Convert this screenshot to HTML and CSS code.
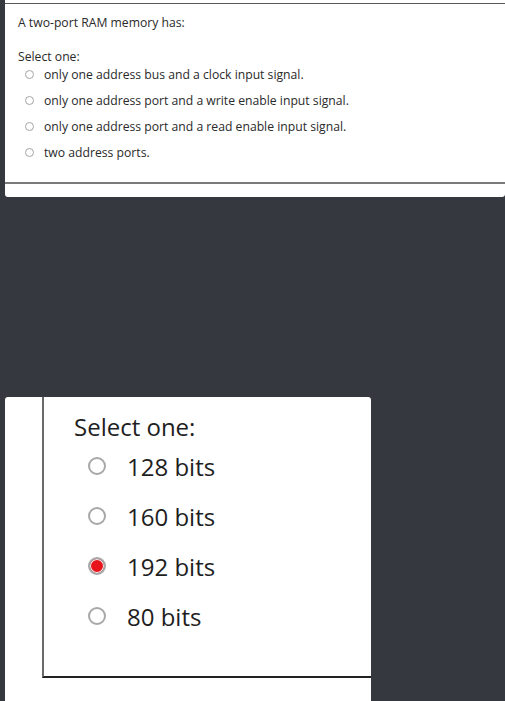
FILE: index.html
```html
<!DOCTYPE html>
<html>
<head>
<meta charset="utf-8">
<link rel="stylesheet" href="styles.css">
</head>
<body>
<div class="card card-top">
  <div class="qbody">
    <div class="qtext">A two-port RAM memory has:</div>
    <div class="prompt">Select one:</div>
    <div class="answers">
      <div class="opt"><span class="radio"></span><span>only one address bus and a clock input signal.</span></div>
      <div class="opt"><span class="radio"></span><span>only one address port and a write enable input signal.</span></div>
      <div class="opt"><span class="radio"></span><span>only one address port and a read enable input signal.</span></div>
      <div class="opt"><span class="radio"></span><span>two address ports.</span></div>
    </div>
  </div>
</div>
<div class="card card-zoom">
  <div class="zbody">
    <div class="zprompt">Select one:</div>
    <div class="zanswers">
      <div class="zopt"><span class="zradio"></span><span>128 bits</span></div>
      <div class="zopt"><span class="zradio"></span><span>160 bits</span></div>
      <div class="zopt"><span class="zradio checked"></span><span>192 bits</span></div>
      <div class="zopt"><span class="zradio"></span><span>80 bits</span></div>
    </div>
  </div>
</div>
</body>
</html>
```
FILE: styles.css
```css
html, body {
  margin: 0;
  padding: 0;
  background: #36383f;
  height: 701px;
  overflow: hidden;
}
body {
  font-family: "Open Sans", "Noto Sans", sans-serif;
  color: #1e1e1e;
}
.card {
  background: #fff;
  margin-left: 5px;
  overflow: hidden;
}
.card-top {
  width: 500px;
  height: 197px;
  box-sizing: border-box;
  padding-top: 3px;
  border-radius: 0 0 3px 3px;
}
.qbody {
  border-top: 1px solid #5a5a5a;
  border-bottom: 2px solid #7a7a7a;
  padding: 10px 0 21px 13px;
  font-size: 12.2px;
  color: #2a2a2a;
}
.qtext {
  line-height: 18px;
  margin-bottom: 17px;
}
.prompt {
  line-height: 16px;
}
.answers {
  display: flex;
  flex-direction: column;
  gap: 8px;
}
.opt {
  display: flex;
  align-items: center;
  height: 18px;
  padding-left: 7px;
  gap: 10px;
}
.radio {
  width: 9px;
  height: 9px;
  box-sizing: border-box;
  border: 1px solid #a4a4a4;
  border-radius: 50%;
  background: #fff;
  flex: none;
}
.card-zoom {
  margin-top: 200px;
  width: 366px;
  height: 310px;
  border-radius: 3px 3px 0 0;
}
.zbody {
  margin-left: 37px;
  width: 400px;
  height: 281px;
  box-sizing: border-box;
  border-left: 2px solid #6a6a6a;
  border-bottom: 2px solid #222;
  padding: 14px 0 0 30px;
  font-size: 24px;
}
.zprompt {
  line-height: 32px;
}
.zanswers {
  margin-top: 7px;
  display: flex;
  flex-direction: column;
  gap: 18px;
}
.zopt {
  display: flex;
  align-items: center;
  height: 32px;
  padding-left: 14px;
  gap: 21px;
}
.zradio {
  width: 18px;
  height: 18px;
  box-sizing: border-box;
  border: 2px solid #a8a8a8;
  border-radius: 50%;
  background: #fff;
  flex: none;
}
.zradio.checked {
  background: #e8141c;
  box-shadow: inset 0 0 0 1px #f4f4f4;
}
```
